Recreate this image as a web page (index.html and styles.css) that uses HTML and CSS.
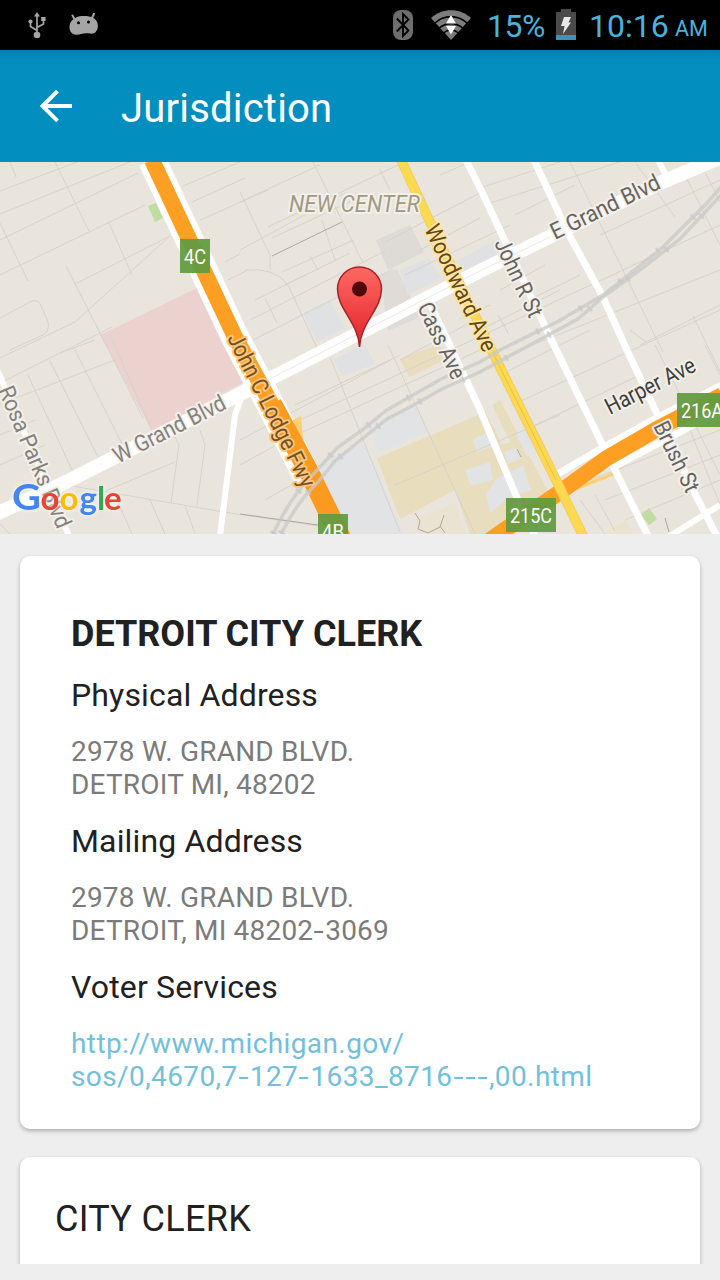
FILE: index.html
```
<!DOCTYPE html>
<html lang="en">
<head>
<meta charset="utf-8">
<meta name="viewport" content="width=device-width, initial-scale=1">
<title>Jurisdiction</title>
<link rel="stylesheet" href="styles.css">
</head>
<body>
    <div class="status">
        <svg class="icon-usb" width="20" height="28" viewBox="0 0 20 28">
            <path d="M10 3v20M10 18.500L3.500 14.500V9.500M10 15.500L16.500 12V7.500" fill="none" stroke="#a5a5a5" stroke-width="1.700"/>
            <path d="M10 0l3 4.500H7zM14.200 5h4.400v4h-4.400z" fill="#a5a5a5"/>
            <circle cx="3.500" cy="9.500" r="2.100" fill="#a5a5a5"/>
            <circle cx="10" cy="23" r="3.300" fill="#a5a5a5"/>
        </svg>
        <svg class="icon-droid" width="30" height="24" viewBox="0 0 30 24">
            <path d="M3.500 2.500L6 7M25 .7L22.500 6" stroke="#a5a5a5" stroke-width="2" stroke-linecap="round"/>
            <path d="M.5 15C0 8 6 3.500 13 3c8-.5 14.500 1.500 15.700 8 .9 6-2.200 10.500-7.700 9.500-3-.6-6-.5-9 .5C6 23 1 21 .5 15z" fill="#a5a5a5"/>
            <circle cx="9.500" cy="9.700" r="1.500"/>
            <circle cx="19.500" cy="9" r="1.500"/>
        </svg>
        <svg class="icon-bt" width="20" height="30" viewBox="0 0 20 30">
            <rect width="20" height="30" rx="8" fill="#6e6e6e"/>
            <path d="M3.800 8.500L15.500 20.500 10 26V4l5.500 5.500L3.800 21.500" fill="none" stroke="#000" stroke-width="1.800"/>
        </svg>
        <svg class="icon-wifi" width="40" height="30" viewBox="0 0 40 30">
            <path d="M0 8C11-2.500 29-2.500 40 8L20 30z" fill="#7c7c7c"/>
            <path d="M4 13C13 4.500 27 4.500 36 13M8 18.500C15 12 25 12 32 18.500M12.500 23c4.500-4 10.500-4 15 0" fill="none" stroke="#000" stroke-width="1.600"/>
            <path d="M20 5l5 8.500H15zM15 16h10l-5 8.500z" fill="#fff"/>
        </svg>
        <span class="level">15%</span>
        <svg class="icon-battery" width="20" height="31" viewBox="0 0 20 31">
            <path d="M0 3h5V0h10v3h5v23H0z" fill="#4a4a4a"/>
            <path d="M0 26h20v5H0z" fill="#3b93bd"/>
            <path d="M8 8h7l-2.500 5.500H15L7 25l1.500-8H5z" fill="#e8e8e8"/>
        </svg>
        <span class="clock">10:16</span>
        <span class="ampm">AM</span>
    </div>

    <div class="appbar">
        <svg class="back" width="32" height="32" viewBox="0 0 32 32">
            <path d="M32 16H3M17.500 1.200L2.500 16l15 14.800" fill="none" stroke="#fff" stroke-width="4"/>
        </svg>
        <h1>Jurisdiction</h1>
    </div>

    <svg class="map" width="720" height="372" viewBox="0 162 720 372">
        <defs>
            <linearGradient id="pin" x1="0" y1="0" x2="0" y2="1">
                <stop offset="0" stop-color="#fd6a62"/>
                <stop offset="1" stop-color="#e3212c"/>
            </linearGradient>
        </defs>
        <rect y="162" width="720" height="372" fill="#e9e5dd"/>

        <!-- areas -->
        <path d="M100 335L197 288 248 380 152 431z" fill="#ebd2cf"/>
        <path d="M148 206l8-3 7 15-8 4zM641 515l8-7 8 11-8 6z" fill="#c0dca0"/>
        <path d="M376 240l34-15 14 27-36 18z" fill="#dedad5"/>
        <path d="M380 275l17-6 23 48-32 14z" fill="#dfdbd6"/>
        <path d="M400 270l29-12 12 20-33 17zM455 262l45-24 8 14-42 20zM303 313l26-13 16 28-28 14zM333 360l32-16 10 20-32 12z" fill="#e0e1e3"/>
        <path d="M377 450l-8-24 47-22 12 28-48 20zM322 461l42-18 20 45 20 46h-62l-25-44z" fill="#e2e3e5"/>
        <path d="M400 359l39-15 8 15-38 18zM377 458l99-42 24-16 50 95-35 39h-45l-15-44-55 29-16-42z" fill="#e8ddbd"/>
        <path d="M473 439l18-8 6 14-20 7zM465 470l25-8 3 18-22 6zM516 435l9-6 14 23-12 4zM504 452l13-4 5 10-14 6zM486 494l10-15 27-14 8 25-23 8-18 15z" fill="#e2e3e5"/>
        <path d="M480 400l8-4 22 46-8 3z" fill="#e9e5dd"/>
        <path d="M415 520l40-17 10 31h-44zM600 534l26-14 8 14z" fill="#ebe3d2"/>

        <!-- side streets -->
        <g class="lane">
            <path d="M0 191L77 162M0 214L130 162M0 240L138 173M0 275L145 205M0 358L75 322 170 236"/>
            <path d="M75 284L170 236M10 162l6 15M55 162l34 69M0 223l28 58M109 223l23 52M66 266L143 418"/>
            <path d="M0 318l32-17q7-2 10 7l6 14q2 9-5 13l-33 15M0 383L112 327M0 404L115 360M60 353l35-13"/>
            <path d="M28 375l45 97M50 361l48 96M75 350l47 94M110 335l42 95M0 435L35 420M0 465L45 445"/>
            <path d="M183 186L240 162M192 202L245 178M200 220L268 190M225 262L240 254M228 280L248 270"/>
            <path d="M240 202L320 165M268 227L400 164M240 250L345 193M255 300L350 253M313 162l50 101M240 192l30 63v15M245 270q30-3 43 15l29 63M272 238l97-45M282 272l72-32M250 320l135-69M253 340l140-71"/>
            <path d="M322 220l12 37 2 3M310 256l8 14M265 298l12 25M285 285l20-10M380 170l10 20M440 175L470 162M420 250L480 218M385 242L480 193M405 275L510 225"/>
            <path d="M240 440L400 355M240 465L300 432M295 405L390 360M300 420L720 225M303 432L480 350M330 357l70 175M388 345l87 189M400 360l75-40M265 500L300 480M395 485L560 415"/>
            <path d="M480 188L560 162M487 204L620 162M515 215l60-30M480 310L490 305M500 290L545 265M525 302L580 275M480 330L560 290M498 315l10 18M520 350L720 270"/>
            <path d="M570 162l93 190M635 162l40 55M685 175l35 70M600 235L720 180M640 345L720 305M693 316l27 55M630 330l16 12M500 375L590 330M512 405L720 310M525 430L640 375"/>
            <path d="M590 480L720 430M605 500L720 455M625 520L720 480M690 430l30 75M705 345l15 30M580 500l25 34M595 495l20 36M655 345l65 130M700 162l20 40"/>
            <path d="M60 484L230 513 318 526M60 510L175 462M174 435l5 10-8 58M200 430l5 15-8 60M115 495l17 39M150 500l15 34M185 505l10 29M0 524l10 10"/>
        </g>
        <path d="M272 256L342 222M240 514l78 11M415 513l5 8-2 8 10 4 12-6 4-12M440 526l5 7M517 449l4 8M665 518l4 14" class="edge"/>

        <!-- white roads -->
        <g class="road">
            <path d="M244 390L235 415 220 536" stroke-width="6"/>
            <path d="M-3 369L69 536" stroke-width="6"/>
            <path d="M425 293L478 405 517 498 535 536" stroke-width="7"/>
            <path d="M466 160L481 190 550 337 603 446 613 466 648 536" stroke-width="7"/>
            <path d="M534 160L568 233 602 295 626 348 660 420 697 498 717 536" stroke-width="7"/>
            <path d="M658 160l9 17M668 537L720 505" stroke-width="6"/>
            <path d="M556 475L602 448 660 416 722 385M612 468L680 432 722 410" stroke-width="7"/>
            <path d="M-4 514L60 485 240 394 295 366 480 271 600 212 660 183 724 156" stroke-width="14"/>
        </g>
        <path d="M250 389L295 366 480 271 550 237" class="split"/>

        <!-- freeways -->
        <path d="M152 160L234 335 270 404 308 478" fill="none" stroke="#fff" stroke-width="28"/>
        <path d="M293 420l8-4 2 22 14 37-10 5z" fill="#fbcf73"/>
        <path d="M152 160L234 335 280 420" fill="none" stroke="#fd9f22" stroke-width="16"/>
        <path d="M272 404L308 470 342 540" fill="none" stroke="#fb9a1e" stroke-width="20"/>
        <path d="M565 493L613 474" stroke="#fbcf73" stroke-width="3"/>
        <path d="M490 540L560 492 607 458 657 429 722 395" fill="none" stroke="#fd9f22" stroke-width="16"/>
        <path d="M401 160L430 222 494 355 558 484 585 540" fill="none" stroke="#f0cd62" stroke-width="10"/>
        <path d="M401 160L430 222 494 355 558 484 585 540" fill="none" stroke="#fdd950" stroke-width="8"/>
        <path d="M494 355L556 480" stroke="#e9bf4a"/>

        <!-- railway -->
        <g class="rail">
            <path d="M273 534Q290 498 310 478L337 448 362 430 387 410 413 395 443 378 480 362 500 350 557 322 603 295 662 248 707 203 722 186"/>
            <path d="M281 534Q297 502 318 482L335 461 357 443 387 419 410 407 442 389 480 372 578 319 603 297 640 270 680 239 722 194"/>
            <path class="ties" d="M273 534Q290 498 310 478L337 448 362 430 387 410 413 395 443 378 480 362 500 350 557 322 603 295 662 248 707 203 722 186"/>
            <path class="ties" d="M281 534Q297 502 318 482L335 461 357 443 387 419 410 407 442 389 480 372 578 319 603 297 640 270 680 239 722 194"/>
        </g>

        <!-- street names -->
        <g class="label">
            <text x="289" y="212" textLength="131" lengthAdjust="spacingAndGlyphs" class="district">NEW CENTER</text>
            <text transform="translate(118 464) rotate(-27)" textLength="123" lengthAdjust="spacingAndGlyphs" class="pale">W Grand Blvd</text>
            <text transform="translate(555 240) rotate(-26)" textLength="119" lengthAdjust="spacingAndGlyphs">E Grand Blvd</text>
            <text transform="translate(610 415) rotate(-27)" textLength="98" lengthAdjust="spacingAndGlyphs" class="dark">Harper Ave</text>
            <text transform="translate(424 229) rotate(64.500)" textLength="138" lengthAdjust="spacingAndGlyphs" class="yellow">Woodward Ave</text>
            <text transform="translate(227 338) rotate(63.500)" textLength="169" lengthAdjust="spacingAndGlyphs" class="orange">John C Lodge Fwy</text>
            <text transform="translate(417 307) rotate(64.500)" textLength="82" lengthAdjust="spacingAndGlyphs">Cass Ave</text>
            <text transform="translate(494 243) rotate(65)" textLength="84" lengthAdjust="spacingAndGlyphs">John R St</text>
            <text transform="translate(653 426) rotate(64)" textLength="76" lengthAdjust="spacingAndGlyphs">Brush St</text>
            <text transform="translate(-2 390) rotate(67)" textLength="152" lengthAdjust="spacingAndGlyphs" class="pale">Rosa Parks Blvd</text>
        </g>

        <!-- exit numbers -->
        <g class="exit">
            <rect x="180" y="239" width="30" height="34"/>
            <text x="184" y="264" textLength="22" lengthAdjust="spacingAndGlyphs">4C</text>
            <rect x="318" y="514" width="30" height="34"/>
            <text x="322" y="539" textLength="22" lengthAdjust="spacingAndGlyphs">4B</text>
            <rect x="506" y="498" width="50" height="34"/>
            <text x="510" y="523" textLength="42" lengthAdjust="spacingAndGlyphs">215C</text>
            <rect x="677" y="393" width="50" height="34"/>
            <text x="681" y="418" textLength="42" lengthAdjust="spacingAndGlyphs">216A</text>
        </g>

        <!-- marker -->
        <path d="M359.500 347C358 322 337.500 309 337.500 289a22 22 0 0 1 44 0C381.500 309 361 322 359.500 347z" fill="url(#pin)" stroke="#a8222a" stroke-width="1.500"/>
        <circle cx="359.500" cy="289" r="7.500" fill="#4d0709"/>

        <g class="google">
            <text x="12" y="510" class="cap" textLength="29" lengthAdjust="spacingAndGlyphs" fill="#4285f4">G</text>
            <text y="510"><tspan x="40.500" fill="#ea4335">o</tspan><tspan x="59.500" fill="#fbbc05">o</tspan><tspan x="79.500" fill="#4285f4">g</tspan><tspan x="97" fill="#34a853">l</tspan><tspan x="104" fill="#ea4335">e</tspan></text>
        </g>
    </svg>

    <div class="cards">
        <div class="card">
            <h2>DETROIT CITY CLERK</h2>
            <h3>Physical Address</h3>
            <p>2978 W. GRAND BLVD.<br>DETROIT MI, 48202</p>
            <h3>Mailing Address</h3>
            <p>2978 W. GRAND BLVD.<br>DETROIT, MI 48202<span class="dash">-</span>3069</p>
            <h3>Voter Services</h3>
            <p class="link">http://www.michigan.gov/<br>sos/0,4670,7<span class="dash">-</span>127<span class="dash">-</span>1633_8716<span class="dash">-</span><span class="dash">-</span><span class="dash">-</span>,00.html</p>
        </div>
        <div class="card next">
            <h2>CITY CLERK</h2>
        </div>
    </div>
</body>
</html>
```

FILE: styles.css
```
* {
    box-sizing: border-box;
}
body {
    margin: 0;
    height: 1280px;
    overflow: hidden;
    background-color: #eeeeee;
    font-family: Roboto, "Noto Sans", sans-serif;
    color: #212121;
}
h1, h2, h3, p {
    margin: 0;
}
svg {
    display: block;
    flex: none;
}
/* Status bar */
.status {
    display: flex;
    align-items: flex-start;
    height: 50px;
    background-color: #000;
    color: #46b4df;
    font-size: 32px;
    line-height: 38px;
    padding-top: 7px;
    white-space: nowrap;
}
.status span {
    flex: none;
}
.icon-usb {
    margin: 5px 0 0 27px;
}
.icon-droid {
    margin: 6px 0 0 22px;
}
.icon-bt {
    margin: 3px 0 0 294px;
}
.icon-wifi {
    margin: 3px 0 0 18px;
}
.level {
    width: 69px;
    margin-left: 16px;
    letter-spacing: -0.5px;
}
.icon-battery {
    margin-top: 2px;
}
.clock {
    width: 86px;
    margin-left: 13px;
}
.ampm {
    font-size: 21.500px;
    line-height: 44px;
}
/* Toolbar */
.appbar {
    display: flex;
    align-items: center;
    height: 112px;
    padding-left: 40px;
    background: linear-gradient(#0580ad, #028dbd 10px, #028ebf 24px);
    color: #fff;
}
.back {
    margin-right: 49px;
}
.appbar h1 {
    padding-top: 5px;
    font-size: 40px;
    font-weight: 400;
    line-height: 47px;
    letter-spacing: 0.2px;
}
/* Map */
.map {
    overflow: hidden;
}
.lane {
    fill: none;
    stroke: #d7d3cb;
    stroke-width: 1;
}
.edge {
    fill: none;
    stroke: #aaa89f;
}
.road {
    fill: none;
    stroke: #fff;
}
.split {
    fill: none;
    stroke: #ebe8e3;
}
.rail {
    fill: none;
    stroke: #c8c8c7;
    stroke-width: 3.500;
    stroke-opacity: .75;
}
.rail .ties {
    stroke-width: 7;
    stroke-dasharray: 2.500 46;
}
.label text {
    font-size: 23px;
    fill: #66645f;
    stroke: #f3f0eb;
    stroke-width: 4px;
    stroke-linejoin: round;
    paint-order: stroke;
}
.label .district {
    font-style: italic;
    fill: #a09a80;
}
.label .pale {
    fill: #85827c;
}
.label .dark {
    fill: #403f3c;
}
.label .yellow {
    fill: #694410;
    stroke: #fbe6a5;
}
.label .orange {
    fill: #77501f;
    stroke: #fcc67f;
}
.exit rect {
    fill: #629b40;
    fill-opacity: .94;
}
.exit text {
    font-size: 20px;
    fill: #fff;
}
.google {
    font-family: Lato, sans-serif;
    font-size: 33px;
    font-weight: 700;
    filter: drop-shadow(0 0 2px #fff);
}
.google .cap {
    font-size: 36px;
}
/* Cards */
.cards {
    height: 730px;
    padding: 22px 20px 0;
    overflow: hidden;
}
.card {
    height: 573px;
    padding: 57px 51px 36px;
    background-color: #fff;
    border-radius: 10px;
    box-shadow: 0 2px 4px rgba(0, 0, 0, .27);
}
.card h2 {
    font-size: 36px;
    font-weight: 700;
    line-height: 42px;
}
.card h3 {
    margin-top: 21px;
    font-size: 32px;
    font-weight: 400;
    line-height: 38px;
    letter-spacing: 0.15px;
}
.card p {
    margin-top: 21px;
    font-size: 28px;
    line-height: 33px;
    letter-spacing: 0.2px;
    color: #7b7b7b;
}
.card .link {
    color: #72c0dd;
    letter-spacing: 0.4px;
}
/* Wider hyphen */
.dash {
    display: inline-block;
    margin: 0 2px;
    transform: scaleX(1.35);
}
.next {
    margin-top: 28px;
    padding: 41px 35px;
}
.next h2 {
    font-weight: 400;
    letter-spacing: 0.3px;
}
```
